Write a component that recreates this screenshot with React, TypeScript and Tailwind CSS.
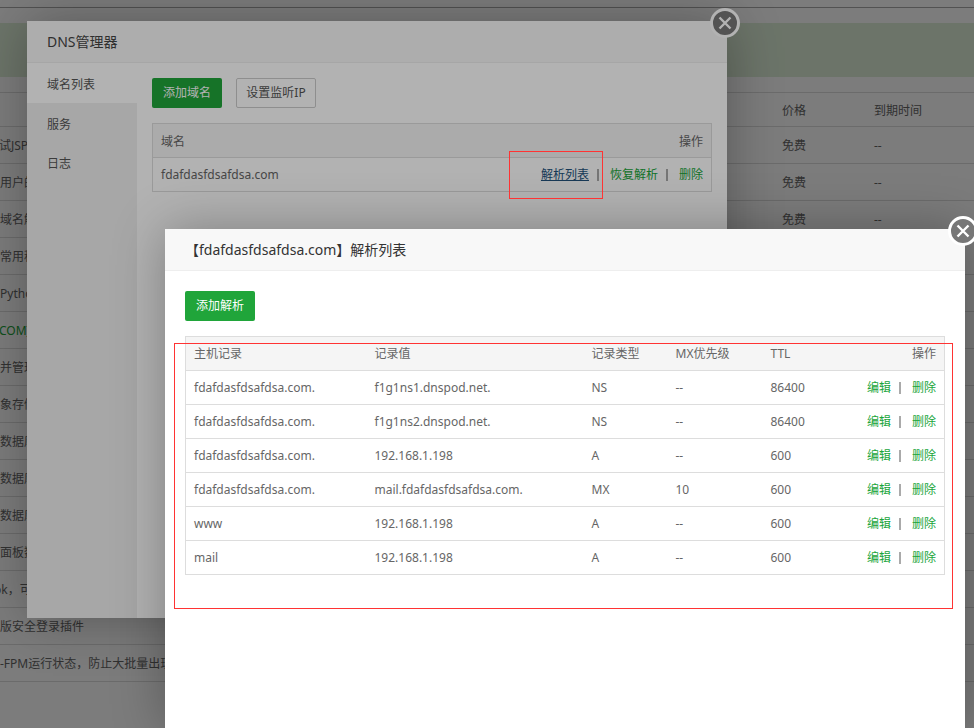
const pageRows: [string, string, boolean, string][] = [
  ["试JSP环境安装部署", "免费", true, "-ml-[1px]"],
  ["用户的网站管理工具", "免费", true, ""],
  ["域名解析管理工具", "免费", true, ""],
  ["常用程序一键部署", "", false, ""],
  ["Python项目管理器", "", false, ""],
  ["COM]环境插件", "", false, "-ml-[1px]"],
  ["并管理多个站点", "", false, ""],
  ["象存储管理工具", "", false, ""],
  ["数据库备份工具", "", false, ""],
  ["数据库管理工具", "", false, ""],
  ["数据库同步工具", "", false, ""],
  ["面板数据备份工具", "", false, ""],
  ["ok，可视化管理", "", false, "-ml-[6px]"],
  ["版安全登录插件", "", false, ""],
  ["-FPM运行状态，防止大批量出现", "", false, ""],
];

const records = [
  ["fdafdasfdsafdsa.com.", "f1g1ns1.dnspod.net.", "NS", "--", "86400"],
  ["fdafdasfdsafdsa.com.", "f1g1ns2.dnspod.net.", "NS", "--", "86400"],
  ["fdafdasfdsafdsa.com.", "192.168.1.198", "A", "--", "600"],
  ["fdafdasfdsafdsa.com.", "mail.fdafdasfdsafdsa.com.", "MX", "10", "600"],
  ["www", "192.168.1.198", "A", "--", "600"],
  ["mail", "192.168.1.198", "A", "--", "600"],
];

function CloseButton() {
  return (
    <button className="absolute -right-[13px] -top-[13px] flex h-[30px] w-[30px] items-center justify-center rounded-full border-[3px] border-white bg-[#777]">
      <svg width="14" height="14" viewBox="0 0 14 14" fill="none">
        <path d="M1.5 1.5 12.5 12.5M12.5 1.5 1.5 12.5" stroke="#fff" strokeWidth="2.4" />
      </svg>
    </button>
  );
}

function Sep() {
  return <span className="ml-[8px] mr-[11px] inline-block h-[12px] w-[2px] translate-y-[2px] bg-[#aaa]" />;
}

export default function App() {
  return (
    <div className="relative h-[728px] w-full overflow-hidden bg-white text-xs text-[#666] [font-family:'Noto_Sans','Noto_Sans_CJK_SC',sans-serif]">
      {/* Page behind the dialogs */}
      <div className="h-[8px] border-b border-[#aaa]" />
      <div className="mt-[15px] h-[54px] bg-[#dff0d8]" />
      <div className="mt-[15px] border-t border-[#ddd]">
        <div className="grid h-[34px] grid-cols-[782px_92px_1fr] items-center border-b border-[#ddd] pt-[2px]">
          <span />
          <span>价格</span>
          <span>到期时间</span>
        </div>
        {pageRows.map(([name, price, free, shift], i) => (
          <div key={i} className="grid h-[37px] grid-cols-[782px_92px_1fr] items-center border-b border-[#ddd] pt-[2px]">
            <span className={`whitespace-nowrap ${shift} ${name.startsWith("COM") ? "text-[#20a53a]" : ""}`}>{name}</span>
            <span>{price}</span>
            <span>{free ? "--" : ""}</span>
          </div>
        ))}
      </div>

      <div className="absolute inset-0 bg-black/30" />

      {/* DNS manager dialog */}
      <div className="absolute left-[27px] top-[21px] flex h-[597px] w-[700px] flex-col bg-white shadow-[1px_1px_50px_rgba(0,0,0,0.3)]">
        <CloseButton />
        <div className="flex h-[42px] shrink-0 items-center border-b border-[#eee] bg-[#f8f8f8] px-5 text-sm text-[#444]">DNS管理器</div>
        <div className="flex min-h-0 flex-1">
          <div className="w-[110px] shrink-0 bg-[#f0f0f0] text-[#555]">
            <div className="flex h-10 items-center bg-white px-5 pt-[3px]">域名列表</div>
            <div className="flex h-10 items-center px-5 pt-[3px]">服务</div>
            <div className="flex h-10 items-center px-5 pt-[2px]">日志</div>
          </div>
          <div className="flex-1 p-[15px]">
            <div className="flex gap-[14px]">
              <button className="h-[30px] w-[70px] rounded-[2px] bg-[#20a53a] text-xs text-white">添加域名</button>
              <button className="h-[30px] w-[80px] rounded-[2px] border border-[#ccc] text-xs text-[#555]">设置监听IP</button>
            </div>
            <table className="mt-[15px] w-[560px] table-fixed border-collapse border border-[#ddd]">
              <tbody>
                <tr className="h-[34px] border-b border-[#ddd] bg-[#f5f5f5]">
                  <td className="px-2 pt-[2px] font-normal">域名</td>
                  <td className="px-2 pt-[2px] text-right font-normal">操作</td>
                </tr>
                <tr className="h-[34px]">
                  <td className="px-2">fdafdasfdsafdsa.com</td>
                  <td className="px-2 text-right">
                    <a className="text-[#23527c] underline">解析列表</a>
                    <Sep />
                    <a className="text-[#20a53a]">恢复解析</a>
                    <Sep />
                    <a className="text-[#20a53a]">删除</a>
                  </td>
                </tr>
              </tbody>
            </table>
          </div>
        </div>
      </div>

      <div className="absolute inset-0 bg-black/30" />

      {/* Resolve list dialog */}
      <div className="absolute left-[165px] top-[229px] flex h-[499px] w-[800px] flex-col bg-white shadow-[1px_1px_50px_rgba(0,0,0,0.3)]">
        <CloseButton />
        <div className="flex h-[42px] shrink-0 items-center border-b border-[#eee] bg-[#f8f8f8] px-5 text-sm text-[#333]">【fdafdasfdsafdsa.com】解析列表</div>
        <div className="px-5 pt-5">
          <button className="h-[30px] w-[70px] rounded-[2px] bg-[#20a53a] text-xs text-white">添加解析</button>
          <table className="mt-[15px] w-[760px] table-fixed border-collapse border border-[#ddd]">
            <colgroup>
              <col className="w-[181px]" />
              <col className="w-[217px]" />
              <col className="w-[84px]" />
              <col className="w-[95px]" />
              <col className="w-[60px]" />
              <col />
            </colgroup>
            <thead>
              <tr className="h-[34px] border-b border-[#ddd] bg-[#f5f5f5]">
                <th className="px-2 text-left font-normal">主机记录</th>
                <th className="px-2 text-left font-normal">记录值</th>
                <th className="px-2 text-left font-normal">记录类型</th>
                <th className="px-2 text-left font-normal">MX优先级</th>
                <th className="px-2 text-left font-normal">TTL</th>
                <th className="px-2 text-right font-normal">操作</th>
              </tr>
            </thead>
            <tbody>
              {records.map((r, i) => (
                <tr key={i} className="h-[34px] border-b border-[#ddd]">
                  {r.map((c, j) => (
                    <td key={j} className="whitespace-nowrap px-2">{c}</td>
                  ))}
                  <td className="whitespace-nowrap px-2 text-right">
                    <a className="text-[#20a53a]">编辑</a>
                    <Sep />
                    <a className="text-[#20a53a]">删除</a>
                  </td>
                </tr>
              ))}
            </tbody>
          </table>
        </div>
      </div>

      {/* Red annotation frames drawn over the screenshot */}
      <div className="absolute left-[509px] top-[151px] h-[48px] w-[94px] border border-[#ff3333]" />
      <div className="absolute left-[174px] top-[343px] h-[266px] w-[779px] border border-[#ff3333]" />
    </div>
  );
}
